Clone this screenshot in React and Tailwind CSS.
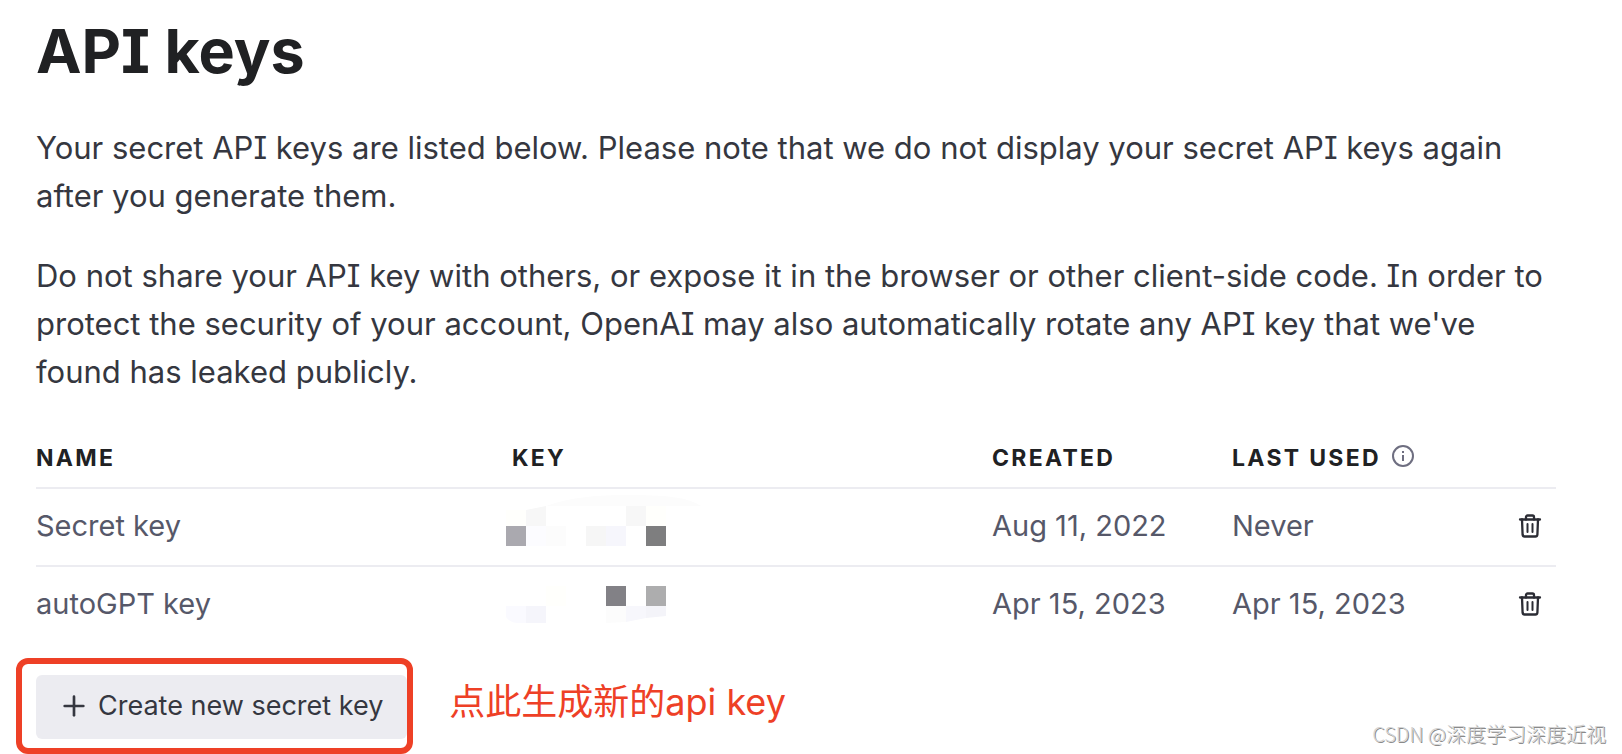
import { Plus } from 'lucide-react'

const keys = [
  { name: "Secret key", created: "Aug 11, 2022", lastUsed: "Never", Mask: MaskSecret },
  { name: "autoGPT key", created: "Apr 15, 2023", lastUsed: "Apr 15, 2023", Mask: MaskAutoGpt },
]

// pixelated masks that hide the key values
function MaskSecret() {
  return (
    <svg className="block" width="208" height="76" viewBox="0 0 208 76" role="img" aria-label="Hidden key">
      <path d="M42 17 C66 8 96 6 122 6 C160 6 184 8 197 17 Z" fill="#fcfcfc" />
      <path d="M2 21h20v16H2z M142 17h20v20h-20z" fill="#fffffc" />
      <path d="M22 21 L42 17 V37 H22 Z M122 17h20v20h-20z" fill="#f7f7f7" />
      <rect x="2" y="37" width="20" height="20" fill="#aaa9af" />
      <rect x="22" y="37" width="20" height="20" fill="#fcfcff" />
      <rect x="42" y="37" width="20" height="20" fill="#fcfcfc" />
      <rect x="82" y="37" width="20" height="20" fill="#f6f6f6" />
      <rect x="102" y="37" width="20" height="20" fill="#f6f6fc" />
      <rect x="142" y="37" width="20" height="20" fill="#7e7e7f" />
    </svg>
  )
}

function MaskAutoGpt() {
  return (
    <svg className="block" width="208" height="76" viewBox="0 0 208 76" role="img" aria-label="Hidden key">
      <rect x="42" y="19" width="20" height="20" fill="#fffffc" />
      <rect x="102" y="19" width="20" height="20" fill="#828186" />
      <rect x="142" y="19" width="20" height="20" fill="#adadae" />
      <path d="M2 39 H22 V56 H14 C8 56 5 54 2 50 Z" fill="#fafaff" />
      <rect x="22" y="39" width="20" height="17" fill="#f5f5fb" />
      <path d="M102 39 H122 V55 L102 56 Z" fill="#fcfcfc" />
      <path d="M122 39 H142 V51 L122 55 Z" fill="#f7f7fc" />
      <path d="M142 39 H162 V49 L142 51 Z" fill="#f4f4f9" />
    </svg>
  )
}

function InfoIcon() {
  return (
    <svg width="24" height="24" viewBox="0 0 24 24" fill="none" stroke="#6e6e80" strokeWidth="2">
      <circle cx="12" cy="12" r="10" />
      <path d="M12 11v6 M12 7v2" />
    </svg>
  )
}

function TrashIcon() {
  return (
    <svg width="24" height="24" viewBox="0 0 24 24" fill="none" stroke="#2b2c34" strokeWidth="2.3" strokeLinecap="round" strokeLinejoin="round">
      <path d="M2 5.5h20" />
      <path d="M8 5.5V3A1.5 1.5 0 0 1 9.5 1.5h5A1.5 1.5 0 0 1 16 3v2.5" />
      <path d="M4 5.500l.6 15.200a2 2 0 0 0 2 1.800h10.800a2 2 0 0 0 2-1.800L20 5.500" />
      <path d="M9.5 10v8 M14.5 10v8" strokeWidth="2" />
    </svg>
  )
}

function App() {
  const thClass = "border-b-2 border-[#ececf1] pb-[15px] font-bold"
  const lineClass = "border-b-2 border-[#ececf1] group-last:border-b-0"
  const tdClass = `${lineClass} pb-0.5`

  return (
    <main className="pt-4 font-['Inter','Noto_Sans_CJK_SC',sans-serif] text-[#353740] [font-feature-settings:'cv08']">
      <div className="pl-9 pr-[66px]">
        <h1 className="text-[61px] font-bold leading-[70px] text-[#202123]">API keys</h1>
        <p className="mt-[38px] text-[31px] leading-12">
          Your secret API keys are listed below. Please note that we do not display your secret API keys again after you generate them.
        </p>
        <p className="mt-8 text-[31px] leading-12">
          Do not share your API key with others, or expose it in the browser or other client-side code. In order to protect the security of your account, OpenAI may also automatically rotate any API key that we've found has leaked publicly.
        </p>

        <table className="mt-12 w-full table-fixed border-separate border-spacing-0 text-left">
          <thead className="text-[23px] leading-7 tracking-widest text-[#202123]">
            <tr>
              <th className={thClass}>NAME</th>
              <th className={`${thClass} w-[488px] pl-2`}>KEY</th>
              <th className={`${thClass} w-60`}>CREATED</th>
              <th className={`${thClass} w-60`}>
                <span className="flex items-start gap-2.5 whitespace-nowrap">LAST USED <InfoIcon /></span>
              </th>
              <th className={`${thClass} w-[84px]`}></th>
            </tr>
          </thead>
          <tbody className="text-[29px] leading-10 text-[#565869]">
            {keys.map(({ name, created, lastUsed, Mask }) => (
              <tr key={name} className="group">
                <td className={tdClass}>{name}</td>
                <td className={lineClass}><Mask /></td>
                <td className={tdClass}>{created}</td>
                <td className={tdClass}>{lastUsed}</td>
                <td className={tdClass}>
                  <button type="button" aria-label={`Delete ${name}`} className="ml-auto mr-3.5 block">
                    <TrashIcon />
                  </button>
                </td>
              </tr>
            ))}
          </tbody>
        </table>
      </div>

      <div className="mt-[15px] flex items-center px-4">
        <div className="rounded-xl border-6 border-[#ee4026] pb-[9px] pl-3.5 pt-[11px]">
          <button type="button" className="flex h-16 items-center gap-2 rounded-md bg-[#ececf1] pb-0.5 pl-[22px] pr-6 text-[27px]">
            <Plus size={32} strokeWidth={2} />
            Create new secret key
          </button>
        </div>
        <p className="ml-9 pb-2 text-4xl text-[#ee4026]">点此生成新的api key</p>
        <p className="ml-auto self-end pb-1.5 font-['Noto_Sans_CJK_SC',sans-serif] text-xl font-light text-[#d4d4d4] [text-shadow:1px_1px_0_#8a8a8a]">
          CSDN @深度学习深度近视
        </p>
      </div>
    </main>
  )
}

export default App
